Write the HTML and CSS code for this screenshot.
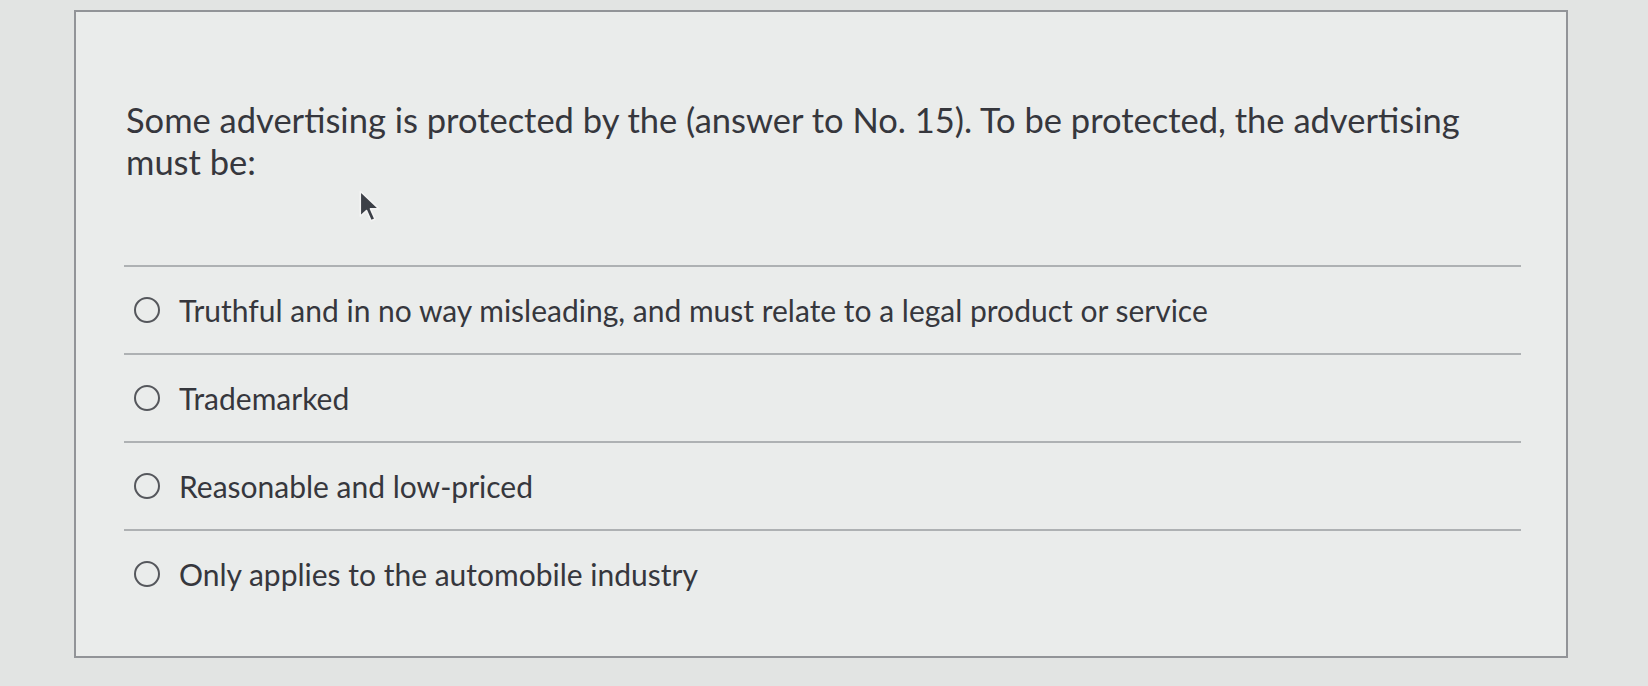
FILE: index.html
```html
<!DOCTYPE html>
<html lang="en">
<head>
<meta charset="utf-8">
<title>Question</title>
<link rel="stylesheet" href="styles.css">
</head>
<body>
<div class="page">
  <div class="card">
    <p class="question">Some advertising is protected by the (answer to No. 15). To be protected, the advertising must be:</p>
    <div class="answers">
      <label class="option"><span class="radio"></span><span class="label">Truthful and in no way misleading, and must relate to a legal product or service</span></label>
      <label class="option"><span class="radio"></span><span class="label">Trademarked</span></label>
      <label class="option"><span class="radio"></span><span class="label">Reasonable and low-priced</span></label>
      <label class="option"><span class="radio"></span><span class="label">Only applies to the automobile industry</span></label>
    </div>
  </div>
  <svg class="cursor" width="25" height="36" viewBox="0 0 22 30">
    <path d="M2 2 L2 24 L7.5 19 L11.5 28 L15 26.5 L11 17.5 L18.5 17.5 Z" fill="#3c4047" stroke="#f4f4f4" stroke-width="1.4" stroke-linejoin="round"/>
  </svg>
</div>
</body>
</html>
```

FILE: styles.css
```css
html, body {
  margin: 0;
  padding: 0;
  background: #e2e4e3;
}
body {
  width: 1648px;
  height: 686px;
  overflow: hidden;
  font-family: Lato, "Open Sans", sans-serif;
  color: #36373d;
}
.page {
  position: relative;
  padding: 10px 0 0 74px;
}
.card {
  box-sizing: border-box;
  width: 1494px;
  height: 648px;
  background: #eaeceb;
  border: 2px solid #929498;
  padding: 87px 45px 0 48px;
}
.question {
  margin: 0 0 0 2px;
  font-size: 34.5px;
  line-height: 42px;
  width: 1390px;
}
.answers {
  margin-top: 82px;
}
.option {
  display: flex;
  align-items: center;
  height: 88px;
  border-top: 2px solid #aeb1b3;
  padding-left: 10px;
  box-sizing: border-box;
}
.radio {
  box-sizing: border-box;
  width: 26px;
  height: 26px;
  border: 2px solid #55575c;
  border-radius: 50%;
  margin-right: 19px;
  flex: none;
}
.label {
  font-size: 30px;
  line-height: 38px;
}
.cursor {
  position: absolute;
  left: 358px;
  top: 188px;
}
```
